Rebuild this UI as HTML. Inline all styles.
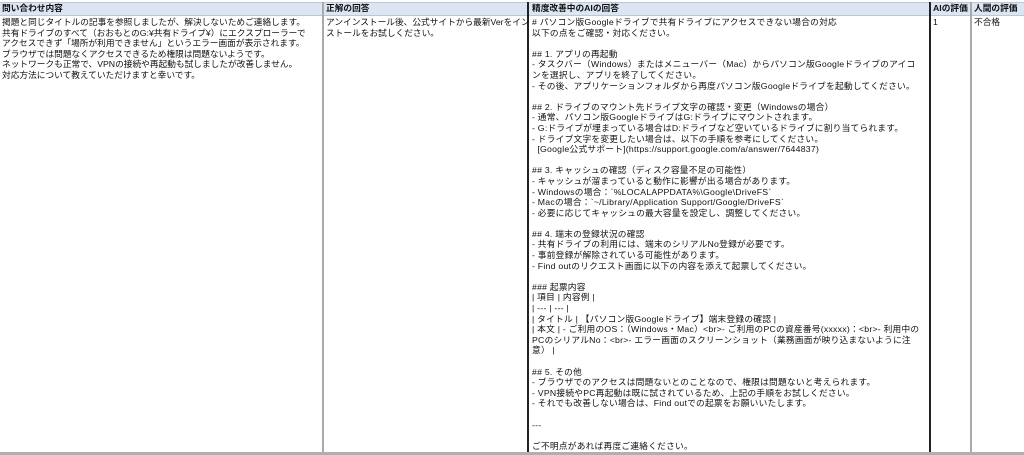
<!DOCTYPE html>
<html><head><meta charset="utf-8"><style>
body{margin:0;width:1024px;height:455px;overflow:hidden;background:#fff;font-family:"Liberation Sans","Noto Sans CJK JP",sans-serif;font-size:8.7px;color:#111;}
.hdr{position:absolute;top:2px;left:0;width:1024px;height:12px;background:#dce6f2;border-top:1px solid #b8c8dc;border-bottom:1px solid #b8c8dc;}
.h{position:absolute;top:3px;font-weight:bold;line-height:11px;white-space:nowrap}
.c{position:absolute;top:17px;line-height:10.6px;white-space:pre}
.v{position:absolute;top:2px;bottom:3px;width:1px;background:#222}
.g{background:#aaa;width:2px}
.bot{position:absolute;left:0;right:0;bottom:0;height:3px;background:#b0b0b0}
.w{letter-spacing:0.25px}
</style></head><body>
<div class="hdr"></div>
<div class="v g" style="left:322px"></div>
<div class="v" style="left:527px;width:2px"></div>
<div class="v" style="left:929px;width:2px"></div>
<div class="v g" style="left:970px"></div>
<div class="h" style="left:2px">問い合わせ内容</div>
<div class="h" style="left:326px">正解の回答</div>
<div class="h" style="left:532px">精度改善中のAIの回答</div>
<div class="h" style="left:933px">AIの評価</div>
<div class="h" style="left:974px">人間の評価</div>
<div class="c" style="left:2px">掲題と同じタイトルの記事を参照しましたが、解決しないためご連絡します。
共有ドライブのすべて（おおもとのG:¥共有ドライブ¥）にエクスプローラーで
アクセスできず「場所が利用できません」というエラー画面が表示されます。
ブラウザでは問題なくアクセスできるため権限は問題ないようです。
ネットワークも正常で、VPNの接続や再起動も試しましたが改善しません。
対応方法について教えていただけますと幸いです。</div>
<div class="c" style="left:326px">アンインストール後、公式サイトから最新Verをイン
ストールをお試しください。</div>
<div class="c w" style="left:532px"># パソコン版Googleドライブで共有ドライブにアクセスできない場合の対応
以下の点をご確認・対応ください。

## 1. アプリの再起動
- タスクバー（Windows）またはメニューバー（Mac）からパソコン版Googleドライブのアイコ
ンを選択し、アプリを終了してください。
- その後、アプリケーションフォルダから再度パソコン版Googleドライブを起動してください。

## 2. ドライブのマウント先ドライブ文字の確認・変更（Windowsの場合）
- 通常、パソコン版GoogleドライブはG:ドライブにマウントされます。
- G:ドライブが埋まっている場合はD:ドライブなど空いているドライブに割り当てられます。
- ドライブ文字を変更したい場合は、以下の手順を参考にしてください。
  [Google公式サポート](https://support.google.com/a/answer/7644837)

## 3. キャッシュの確認（ディスク容量不足の可能性）
- キャッシュが溜まっていると動作に影響が出る場合があります。
- Windowsの場合：`%LOCALAPPDATA%\Google\DriveFS`
- Macの場合：`~/Library/Application Support/Google/DriveFS`
- 必要に応じてキャッシュの最大容量を設定し、調整してください。

## 4. 端末の登録状況の確認
- 共有ドライブの利用には、端末のシリアルNo登録が必要です。
- 事前登録が解除されている可能性があります。
- Find outのリクエスト画面に以下の内容を添えて起票してください。

### 起票内容
| 項目 | 内容例 |
| --- | --- |
| タイトル | 【パソコン版Googleドライブ】端末登録の確認 |
| 本文 | - ご利用のOS：（Windows・Mac）&lt;br&gt;- ご利用のPCの資産番号(xxxxx)：&lt;br&gt;- 利用中の
PCのシリアルNo：&lt;br&gt;- エラー画面のスクリーンショット（業務画面が映り込まないように注
意） |

## 5. その他
- ブラウザでのアクセスは問題ないとのことなので、権限は問題ないと考えられます。
- VPN接続やPC再起動は既に試されているため、上記の手順をお試しください。
- それでも改善しない場合は、Find outでの起票をお願いいたします。

---

ご不明点があれば再度ご連絡ください。</div>
<div class="c" style="left:933px">1</div>
<div class="c" style="left:974px">不合格</div>
<div class="bot"></div>
</body></html>
